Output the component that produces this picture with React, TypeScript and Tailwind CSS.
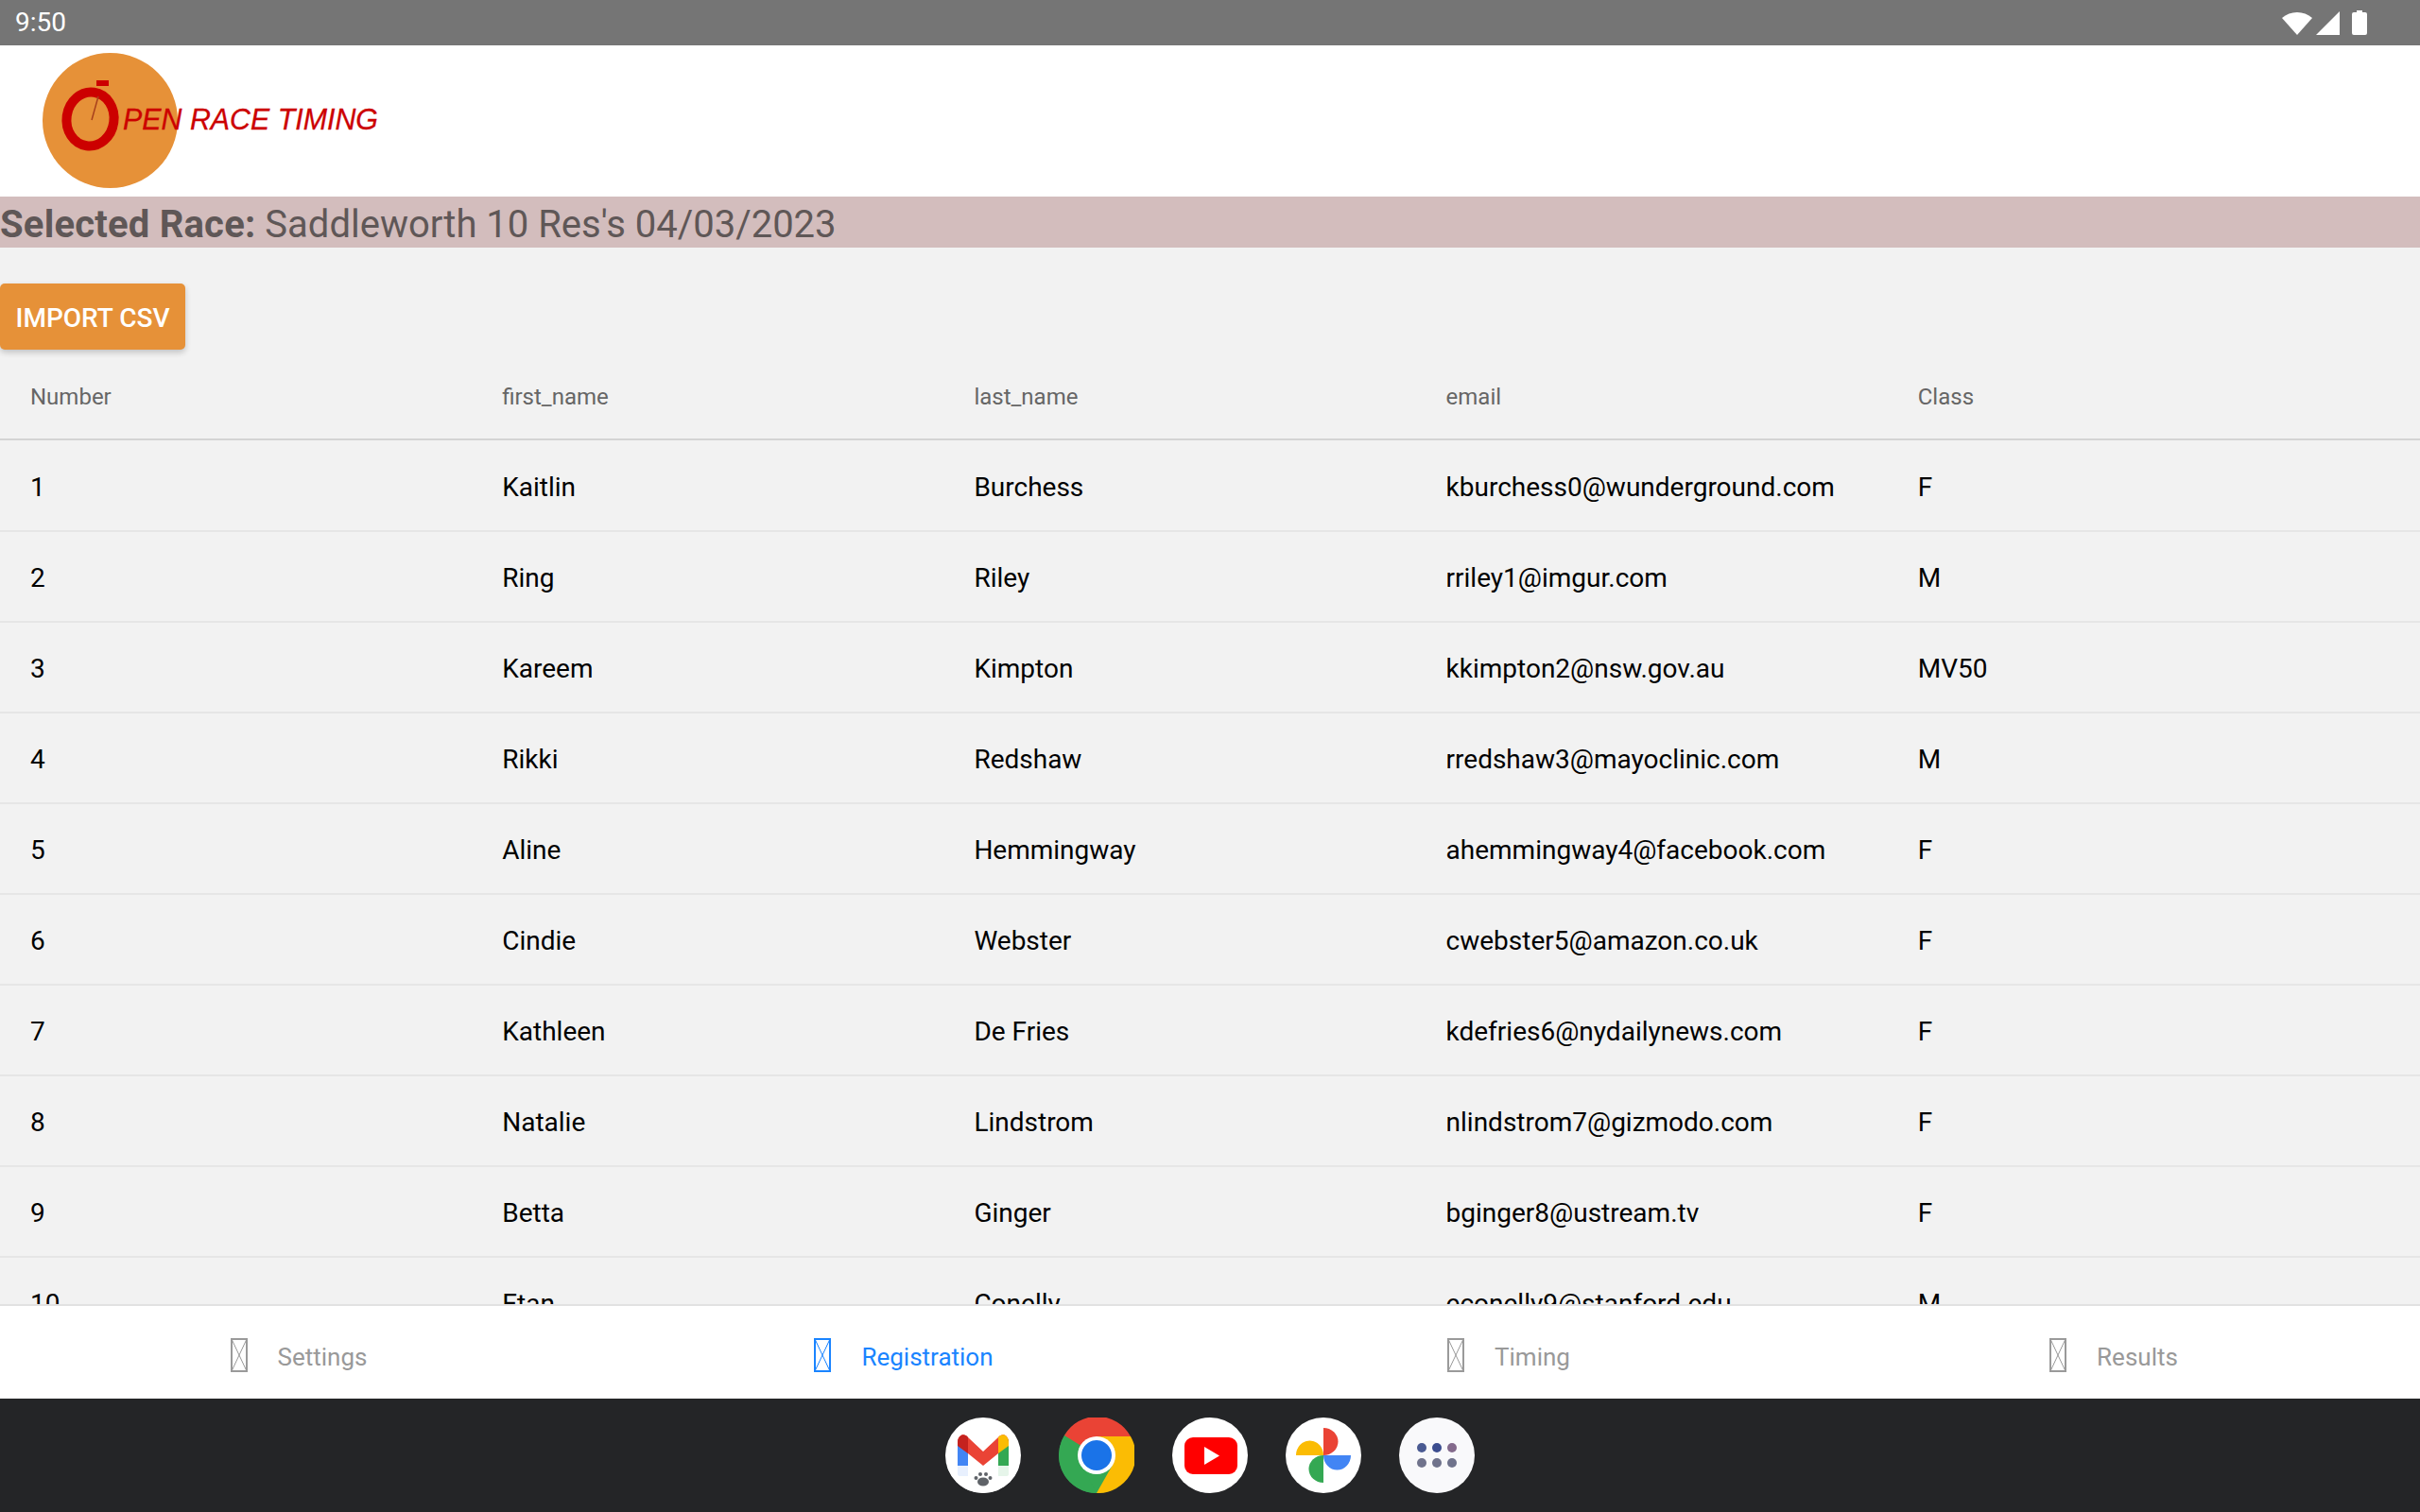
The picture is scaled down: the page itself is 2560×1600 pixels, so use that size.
const runners = [
  ['1', 'Kaitlin', 'Burchess', 'kburchess0@wunderground.com', 'F'],
  ['2', 'Ring', 'Riley', 'rriley1@imgur.com', 'M'],
  ['3', 'Kareem', 'Kimpton', 'kkimpton2@nsw.gov.au', 'MV50'],
  ['4', 'Rikki', 'Redshaw', 'rredshaw3@mayoclinic.com', 'M'],
  ['5', 'Aline', 'Hemmingway', 'ahemmingway4@facebook.com', 'F'],
  ['6', 'Cindie', 'Webster', 'cwebster5@amazon.co.uk', 'F'],
  ['7', 'Kathleen', 'De Fries', 'kdefries6@nydailynews.com', 'F'],
  ['8', 'Natalie', 'Lindstrom', 'nlindstrom7@gizmodo.com', 'F'],
  ['9', 'Betta', 'Ginger', 'bginger8@ustream.tv', 'F'],
  ['10', 'Etan', 'Conelly', 'econelly9@stanford.edu', 'M'],
];

const columns = ['Number', 'first_name', 'last_name', 'email', 'Class'];
const tabs = ['Settings', 'Registration', 'Timing', 'Results'];

// Placeholder box the tab bar shows when its icon font is missing
function MissingGlyph({ active }: { active: boolean }) {
  const color = active ? '#1a84ff' : '#9a9a9a';
  return (
    <svg width="18" height="36" viewBox="0 0 18 36" fill="none" stroke={color} strokeWidth="1">
      <rect x="1" y="1" width="16" height="34" strokeWidth="2" />
      <path d="M1 1 L17 35 M17 1 L1 35" />
    </svg>
  );
}

function Logo() {
  return (
    <svg width="420" height="160" viewBox="0 0 420 160" className="ml-[45px]">
      <circle cx="71.5" cy="79.5" r="71.5" fill="#e69138" />
      <ellipse cx="50.5" cy="78" rx="25" ry="28.5" fill="none" stroke="#cc0000" strokeWidth="10" transform="rotate(8 50.5 78)" />
      <rect x="57" y="37" width="13" height="6" fill="#cc0000" />
      <path d="M59 54 L52 79" stroke="#a8401c" strokeWidth="1.5" />
      <text
        x="85"
        y="89"
        fontFamily="Liberation Sans"
        fontStyle="italic"
        fontSize="31"
        fill="#cc0000"
        stroke="#cc0000"
        strokeWidth="0.3"
        textLength="270"
        lengthAdjust="spacingAndGlyphs"
      >
        PEN RACE TIMING
      </text>
    </svg>
  );
}

function Gmail() {
  return (
    <svg width="80" height="80" viewBox="0 0 80 80">
      <defs>
        <clipPath id="gmail-disc">
          <circle cx="40" cy="40" r="40" />
        </clipPath>
      </defs>
      <circle cx="40" cy="40" r="40" fill="#fff" />
      <path d="M13 23 V60 Q13 62 16 62 H24 V32 Z" fill="#4285f4" />
      <path d="M56 32 V62 H64 Q67 62 67 60 V23 Z" fill="#34a853" />
      <path d="M13 27 C13 18 20 16 24 21 L40 36 L56 21 C60 16 67 18 67 27 L56 38 L40 51 L24 38 Z" fill="#ea4335" />
      <path d="M13 27 C13 18 20 16 24 21 V38 L13 30 Z" fill="#c5221f" />
      <path d="M56 21 C60 16 67 18 67 27 V30 L56 38 Z" fill="#fbbc04" />
      <rect x="0" y="51" width="80" height="29" fill="#fff" opacity="0.88" clipPath="url(#gmail-disc)" />
      <g fill="#5f6368">
        <ellipse cx="40" cy="68" rx="6" ry="4.5" />
        <circle cx="32.5" cy="64" r="2" />
        <circle cx="37" cy="60" r="2" />
        <circle cx="43" cy="60" r="2" />
        <circle cx="47.5" cy="64" r="2" />
      </g>
    </svg>
  );
}

function Chrome() {
  return (
    <svg width="80" height="80" viewBox="0 0 80 80">
      <circle cx="40" cy="40" r="40" fill="#34a853" />
      <path d="M40 40 L6 19 A40 40 0 0 1 76 20 H40 Z" fill="#ea4335" />
      <path d="M40 20 H76 A40 40 0 0 1 40 80 L57 50 Z" fill="#fbbc04" />
      <path d="M6 19 L24 50 L40 80 A40 40 0 0 1 6 19 Z" fill="#34a853" />
      <circle cx="40" cy="40" r="20" fill="#fff" />
      <circle cx="40" cy="40" r="16" fill="#1a73e8" />
    </svg>
  );
}

function Youtube() {
  return (
    <svg width="80" height="80" viewBox="0 0 80 80">
      <circle cx="40" cy="40" r="40" fill="#fff" />
      <rect x="13" y="21" width="56" height="39" rx="9" fill="#ff0000" />
      <path d="M34 31 L50 40.5 L34 50 Z" fill="#fff" />
    </svg>
  );
}

function Photos() {
  return (
    <svg width="80" height="80" viewBox="0 0 80 80">
      <circle cx="40" cy="40" r="40" fill="#fff" />
      <path d="M40 11 A15.5 14.5 0 0 1 40 40 Z" fill="#ea4335" />
      <path d="M40 40 H69 A14.5 15.5 0 0 1 40 40 Z" fill="#4285f4" />
      <path d="M40 40 V69 A15.5 14.5 0 0 1 40 40 Z" fill="#34a853" />
      <path d="M11 40 A14.5 15.5 0 0 1 40 40 Z" fill="#fbbc04" />
    </svg>
  );
}

function AppsGrid() {
  const dots = [
    ['#4a5a92', 24],
    ['#3c4d8f', 40],
    ['#846a8c', 56],
  ] as const;
  return (
    <svg width="80" height="80" viewBox="0 0 80 80">
      <circle cx="40" cy="40" r="40" fill="#f9f9fb" />
      {dots.map(([fill, x]) => (
        <circle key={x} cx={x} cy="32" r="5" fill={fill} />
      ))}
      {dots.map(([, x]) => (
        <circle key={x} cx={x} cy="48" r="5" fill="#70738c" />
      ))}
    </svg>
  );
}

export default function App() {
  return (
    <div className="flex h-[1600px] w-[2560px] flex-col overflow-hidden bg-[#f2f2f2] font-['Roboto',sans-serif]">
      {/* android status bar */}
      <div className="flex h-12 shrink-0 items-center justify-between bg-[#757575] pl-4 pr-[56px] text-[28px] text-white">
        <span>9:50</span>
        <div className="flex items-center gap-[4px]">
          <svg width="32" height="26" viewBox="0 0 32 26" fill="#fff">
            <path d="M0 8 A24 24 0 0 1 32 8 L16 26 Z" />
          </svg>
          <svg width="25" height="25" viewBox="0 0 25 25" fill="#fff">
            <path d="M25 0 V25 H0 Z" />
          </svg>
          <svg width="16" height="26" viewBox="0 0 16 26" fill="#fff" className="ml-[9px]">
            <path d="M5 0 H11 V2 H14 Q16 2 16 4 V24 Q16 26 14 26 H2 Q0 26 0 24 V4 Q0 2 2 2 H5 Z" />
          </svg>
        </div>
      </div>

      <header className="flex h-40 shrink-0 items-center bg-white">
        <Logo />
      </header>

      <div className="h-[54px] shrink-0 bg-[#d3bdbd] pt-[3px] text-[40px] leading-[54px] text-[#5f5757]">
        <b className="font-bold tracking-[0.2px]">Selected Race:</b> Saddleworth 10 Res's 04/03/2023
      </div>

      <div className="mt-[38px] shrink-0">
        <button className="h-[70px] w-[196px] rounded-[5px] bg-[#e69138] pt-[3px] text-[28px] font-medium text-white shadow-[0_3px_6px_rgba(0,0,0,0.2)]">
          IMPORT CSV
        </button>
      </div>

      <div className="grid h-[96px] shrink-0 grid-cols-[repeat(5,499.2px)] items-center border-b-2 border-[#d4d4d4] text-2xl text-[#666666]">
        {columns.map((c) => (
          <div key={c} className="pl-8 pt-1.5">
            {c}
          </div>
        ))}
      </div>

      <div className="min-h-0 flex-1 overflow-hidden pt-px">
        {runners.map((row) => (
          <div
            key={row[0]}
            className="grid h-[96px] grid-cols-[repeat(5,499.2px)] items-center border-b-2 border-[#e6e6e6] text-[28px] text-black"
          >
            {row.map((cell, i) => (
              <div key={i} className="pl-8 pt-1">
                {cell}
              </div>
            ))}
          </div>
        ))}
      </div>

      <nav className="grid h-[100px] shrink-0 grid-cols-4 border-t-2 border-[#e2e2e2] bg-white">
        {tabs.map((t) => {
          const active = t === 'Registration';
          return (
            <div
              key={t}
              className={`flex items-center justify-center gap-[32px] pr-[8px] pt-[6px] text-[26px] ${active ? 'text-[#1a84ff]' : 'text-[#999999]'}`}
            >
              <MissingGlyph active={active} />
              <span className="pt-1">{t}</span>
            </div>
          );
        })}
      </nav>

      {/* launcher dock */}
      <div className="flex h-[120px] shrink-0 items-center justify-center gap-10 bg-[#242527]">
        <Gmail />
        <Chrome />
        <Youtube />
        <Photos />
        <AppsGrid />
      </div>
    </div>
  );
}
